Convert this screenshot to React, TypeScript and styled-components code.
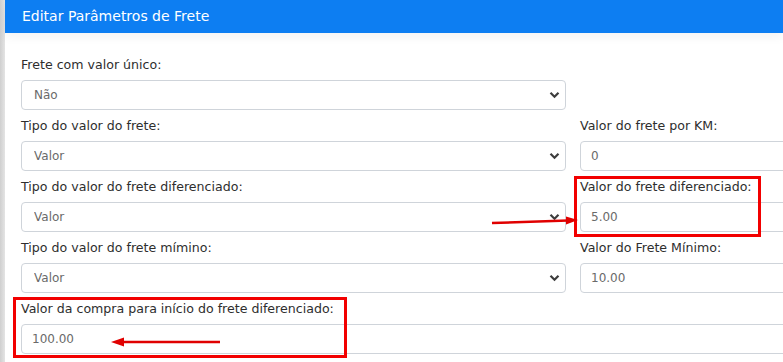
import React from 'react';
import styled, { createGlobalStyle } from 'styled-components';

const GlobalStyle = createGlobalStyle`
  html, body {
    margin: 0;
    padding: 0;
    background: #ffffff;
    overflow: hidden;
  }
  body {
    font-family: "DejaVu Sans", "Open Sans", sans-serif;
  }
`;

const Page = styled.div`
  display: flex;
  width: 783px;
  height: 362px;
  overflow: hidden;
`;

const Strip = styled.div`
  width: 5px;
  flex-shrink: 0;
  background: linear-gradient(to right, #cfcfcf, #e4e4e4);
`;

const Panel = styled.div`
  flex: 1;
  display: flex;
  flex-direction: column;
  min-width: 0;
`;

const Header = styled.div`
  height: 33px;
  flex-shrink: 0;
  background: #0d7ef2;
  color: #ffffff;
  font-size: 14px;
  line-height: 33px;
  padding-left: 17px;
  box-shadow: 0 4px 10px rgba(0, 0, 0, 0.05);
`;

const Body = styled.div`
  padding: 22px 0 0 16px;
`;

const Form = styled.div`
  position: relative;
  display: grid;
  grid-template-columns: 545px 240px;
  column-gap: 14px;
  row-gap: 6px;
`;

const Field = styled.div<{ $wide?: boolean }>`
  grid-column: ${p => (p.$wide ? '1 / -1' : 'auto')};
  display: flex;
  flex-direction: column;
`;

const Label = styled.label`
  display: block;
  font-size: 12.6px;
  line-height: 20px;
  color: #2e2e2e;
  margin-bottom: 5px;
  white-space: nowrap;
`;

const SelectWrap = styled.div`
  position: relative;
`;

const Select = styled.select`
  appearance: none;
  -webkit-appearance: none;
  width: 100%;
  height: 30px;
  box-sizing: border-box;
  border: 1px solid #cfd4da;
  border-radius: 4px;
  background: #ffffff;
  padding: 0 12px;
  font-family: inherit;
  font-size: 12px;
  color: #6a6a6a;
  outline: none;
`;

const Chevron = styled.svg`
  position: absolute;
  right: 6px;
  top: 11px;
  pointer-events: none;
`;

const Input = styled.input`
  width: 100%;
  height: 30px;
  box-sizing: border-box;
  border: 1px solid #cfd4da;
  border-radius: 4px;
  background: #ffffff;
  padding: 0 10px;
  font-family: inherit;
  font-size: 12px;
  color: #6a6a6a;
  outline: none;
`;

const Highlight = styled.div<{ $x: number; $y: number; $w: number; $h: number }>`
  position: absolute;
  left: ${p => p.$x}px;
  top: ${p => p.$y}px;
  width: ${p => p.$w}px;
  height: ${p => p.$h}px;
  box-sizing: border-box;
  border: 3px solid #f20000;
  pointer-events: none;
`;

const Arrow = styled.svg<{ $x: number; $y: number }>`
  position: absolute;
  left: ${p => p.$x}px;
  top: ${p => p.$y}px;
  pointer-events: none;
  overflow: visible;
`;

const SelectField = ({ label, value }: { label: string; value: string }) => (
  <Field>
    <Label>{label}</Label>
    <SelectWrap>
      <Select defaultValue={value}>
        <option>{value}</option>
      </Select>
      <Chevron width="11" height="8" viewBox="0 0 11 8">
        <path d="M1.5 1.8 L5.5 5.8 L9.5 1.8" fill="none" stroke="#3d3d3d" strokeWidth="2.2" />
      </Chevron>
    </SelectWrap>
  </Field>
);

const InputField = ({ label, value, wide }: { label: string; value: string; wide?: boolean }) => (
  <Field $wide={wide}>
    <Label>{label}</Label>
    <Input defaultValue={value} />
  </Field>
);

export default function App() {
  return (
    <>
      <GlobalStyle />
      <Page>
        <Strip />
        <Panel>
          <Header>Editar Parâmetros de Frete</Header>
          <Body>
            <Form>
              <SelectField label="Frete com valor único:" value="Não" />
              <div />
              <SelectField label="Tipo do valor do frete:" value="Valor" />
              <InputField label="Valor do frete por KM:" value="0" />
              <SelectField label="Tipo do valor do frete diferenciado:" value="Valor" />
              <InputField label="Valor do frete diferenciado:" value="5.00" />
              <SelectField label="Tipo do valor do frete mímino:" value="Valor" />
              <InputField label="Valor do Frete Mínimo:" value="10.00" />
              <InputField wide label="Valor da compra para início do frete diferenciado:" value="100.00" />

              <Highlight $x={553} $y={121} $w={187} $h={61} />
              <Highlight $x={-8} $y={242} $w={334} $h={61} />

              <Arrow $x={471} $y={161} width="90" height="10" viewBox="0 0 90 10">
                <path d="M0 7 L76 4.5" stroke="#e00000" strokeWidth="2.5" fill="none" />
                <path d="M74 0.5 L86 4 L74 8.5 Z" fill="#e00000" />
              </Arrow>
              <Arrow $x={89} $y={282} width="110" height="10" viewBox="0 0 110 10">
                <path d="M110 5 L12 5" stroke="#e00000" strokeWidth="2.5" fill="none" />
                <path d="M14 0.5 L1 5 L14 9.5 Z" fill="#e00000" />
              </Arrow>
            </Form>
          </Body>
        </Panel>
      </Page>
    </>
  );
}
